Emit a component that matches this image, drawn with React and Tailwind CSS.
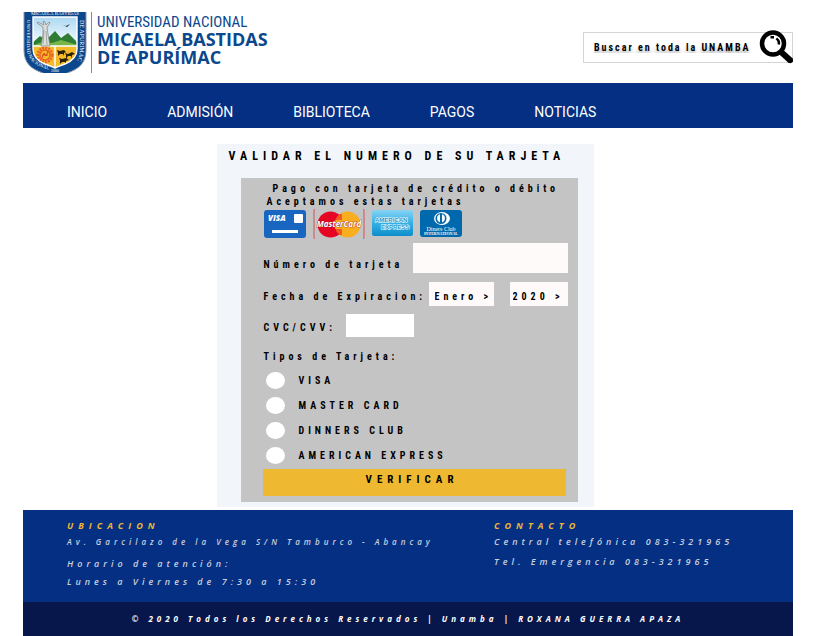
import React from "react";

const navItems = ["INICIO", "ADMISIÓN", "BIBLIOTECA", "PAGOS", "NOTICIAS"];
const cardTypes = ["VISA", "MASTER CARD", "DINNERS CLUB", "AMERICAN EXPRESS"];

function Shield() {
  return (
    <svg viewBox="0 0 64 61" className="h-[61px] w-16 shrink-0" role="img" aria-label="Escudo UNAMBA">
      <defs>
        <clipPath id="field">
          <path d="M10 5H54V37C54 46 47 50 42 52C37 54 34 55 32 56C30 55 27 54 22 52C17 50 10 46 10 37Z" />
        </clipPath>
        <path id="leftRim" d="M4 8V36C4 48 12 54 27 58" />
        <path id="rightRim" d="M57 8V36C57 44 55 49 50 52" />
        <linearGradient id="sky" x2="0" y2="1">
          <stop offset="0" stopColor="#a9d7f2" />
          <stop offset="1" stopColor="#fff" />
        </linearGradient>
      </defs>
      <path d="M1 0H63V38C63 51 56 57 44 61H20C8 57 1 51 1 38Z" fill="#0b478c" />
      <path d="M1 0V38C1 51 8 57 20 61M63 0V38C63 51 56 57 44 61" fill="none" stroke="#8796aa" />
      <g clipPath="url(#field)">
        <path fill="url(#sky)" d="M9 4h46v31H9z" />
        <path fill="#2f7d35" d="M9 31L17 24L23 28L32 19L38 26L45 21L55 31V36H9Z" />
        <path fill="#78b747" d="M9 34L19 30L29 31L38 28L55 33V36H9Z" />
        <path fill="#f5ba27" d="M9 34h46v23H9z" />
        <path stroke="#fff" strokeWidth="1.5" d="M9 34h46M32 34v22" />
        <path fill="#dcdedb" stroke="#7d827f" strokeWidth=".7" d="M20 9l2 1 1 3 3-3 1 1-3 4 1 7 2 12h-9l2-12v-7l-6-4 1-1 6 3z" />
        <path stroke="#7d827f" strokeWidth=".6" d="M21 18l-1 14M23 19l1 14" />
        <path fill="#172d31" d="M39 13l4 1 4-2-3 3-2-1z" />
        <circle cx="22" cy="43" r="7" fill="none" stroke="#eb6522" strokeWidth="3" strokeDasharray="2 1" />
        <circle cx="22" cy="43" r="5" fill="#f5ba27" stroke="#eb6522" strokeWidth="1.4" />
        <path d="M19 46l2-5 2 3 2-5M19 43h6" fill="none" stroke="#d64c22" />
        <path fill="#2c210d" d="M34 38l3 1 4-1 2 2-2 1v3l-1-2h-3l-2 2v-3zM42 41l3 1 4-2 3 2-3 1v4l-1-3h-3l-2 3v-4zM36 46l3 1 4-1 3 2-3 1v3l-1-2h-3l-2 2v-4z" />
      </g>
      <path d="M10 5H54V37C54 46 47 50 42 52C37 54 34 55 32 56C30 55 27 54 22 52C17 50 10 46 10 37Z" fill="none" stroke="#fff" strokeWidth="1.4" />
      <g fill="#fff" fontFamily="'Liberation Serif', serif">
        <text x="32" y="3" fontSize="5" textAnchor="middle">MICAELA BASTIDAS</text>
        <text fontSize="5"><textPath href="#leftRim">UNIVERSIDAD NACIONAL</textPath></text>
        <text fontSize="6"><textPath href="#rightRim">DE APURIMAC</textPath></text>
        <text x="28" y="60" fontSize="4">2000</text>
      </g>
    </svg>
  );
}

function SearchIcon() {
  return (
    <svg viewBox="0 0 34 34" className="h-[34px] w-[34px]" aria-hidden="true">
      <path d="M21 21L32 31" stroke="#000" strokeWidth="6" />
      <path d="M29 28.500L31.500 30.500" stroke="#000" strokeWidth="5" strokeLinecap="round" />
      <circle cx="14" cy="13.500" r="11" fill="#fff" stroke="#000" strokeWidth="4.500" />
      <path d="M11.500 7.300h3.500M17.300 8.500q3.200 2 2.500 6" fill="none" stroke="#000" strokeWidth="2.600" />
    </svg>
  );
}

function CardLogos() {
  return (
    <div className="mt-0.5 flex items-start gap-[7px] pl-px tracking-normal">
      <svg viewBox="0 0 42 28" className="h-7 w-[42px]" role="img" aria-label="Visa">
        <rect width="42" height="28" rx="3" fill="#1966c0" />
        <text x="4" y="11" fill="#fff" fontFamily="'Open Sans', sans-serif" fontSize="8" fontWeight="800" fontStyle="italic">VISA</text>
        <rect x="30" y="4" width="9" height="9" rx="1" fill="#fff" />
        <path fill="#fff" d="M8 20h26v3H8z" />
      </svg>
      <svg viewBox="0 0 52 30" className="-mt-px h-[30px] w-[52px]" role="img" aria-label="MasterCard">
        <path d="M2 0Q1 0 1 2V28Q1 30 2 30M50 0Q51 0 51 2V28Q51 30 50 30" fill="none" stroke="#cf5359" />
        <circle cx="17.500" cy="15.500" r="13" fill="#e60624" />
        <circle cx="34.500" cy="15.500" r="13" fill="#fbad20" />
        <path d="M23 6h6M22 8h7M21 10h8M21 21h8M22 23h7M23 25h6" stroke="#e60624" />
        <text x="26" y="18" textAnchor="middle" fill="#fff" stroke="#8b2020" strokeWidth=".7" paintOrder="stroke" fontFamily="'Open Sans', sans-serif" fontSize="8" fontWeight="700" fontStyle="italic">MasterCard</text>
      </svg>
      <svg viewBox="0 0 41 26" className="h-[26px] w-[41px]" role="img" aria-label="American Express">
        <defs>
          <linearGradient id="amex" x2="0" y2="1">
            <stop offset="0" stopColor="#86d3f5" />
            <stop offset=".5" stopColor="#36b0e4" />
            <stop offset="1" stopColor="#0e8ecb" />
          </linearGradient>
        </defs>
        <rect width="41" height="26" rx="2" fill="url(#amex)" />
        <g fill="#2795c7" stroke="#fff" strokeWidth="1" paintOrder="stroke" fontFamily="'Liberation Sans', sans-serif" fontSize="6" fontWeight="700">
          <text x="3" y="12">AMERICAN</text>
          <text x="9" y="19">EXPRESS</text>
        </g>
      </svg>
      <svg viewBox="0 0 42 27" className="h-[27px] w-[42px]" role="img" aria-label="Diners Club International">
        <rect width="42" height="27" rx="3" fill="#0069ad" />
        <ellipse cx="22" cy="8.500" rx="8" ry="6.500" fill="#fff" />
        <circle cx="21" cy="8.500" r="5.500" fill="#0069ad" />
        <path d="M20 4.300a4.200 4.200 0 0 0 0 8zM22 4.300a4.200 4.200 0 0 1 0 8z" fill="#fff" />
        <g fill="#fff" textAnchor="middle" fontFamily="'Liberation Serif', serif">
          <text x="21" y="21" fontSize="6" fontWeight="400">Diners Club</text>
          <text x="21" y="25" fontSize="4" fontWeight="700">INTERNATIONAL</text>
        </g>
      </svg>
    </div>
  );
}

export default function App() {
  return (
    <div className="min-h-screen bg-white pl-[23px] pr-7 font-['Roboto_Condensed','Roboto',sans-serif] text-black">
      <header className="flex h-[83px] items-start justify-between pt-3">
        <a href="#" className="flex gap-1 text-[#0b478c]">
          <Shield />
          <div className="border-l border-[#6d8cb3] pl-[5px] pt-0.5">
            <div className="text-[15px] leading-4">UNIVERSIDAD NACIONAL</div>
            <div className="font-['Open_Sans','Noto_Sans',sans-serif] text-[18px] font-bold leading-[18px]">MICAELA BASTIDAS<br />DE APURÍMAC</div>
          </div>
        </a>
        <form className="relative mt-5 w-[210px]" onSubmit={(e) => e.preventDefault()}>
          <input
            aria-label="Buscar"
            placeholder="Buscar en toda la UNAMBA"
            className="h-[31px] w-full border border-[#d4d4d4] pl-2.5 pr-8 text-[10px] font-bold tracking-[2px] outline-none [text-shadow:0_4px_4px_rgba(0,0,0,0.4)] placeholder:text-black placeholder:opacity-100"
          />
          <button aria-label="Buscar" className="absolute -top-0.5 right-0"><SearchIcon /></button>
        </form>
      </header>

      <nav className="flex h-[45px] gap-[60px] bg-[#042f83] pl-[44px] pt-[19px] font-['Roboto',sans-serif] text-[14px] leading-5 text-white">
        {navItems.map((item) => <a key={item} href="#">{item}</a>)}
      </nav>

      <div className="flex justify-center pr-1.5 pt-4">
        <main className="w-[377px] bg-[#f2f6fa] px-[16px] pb-[5px] pl-6">
          <h1 className="-mx-3 h-[34px] whitespace-nowrap pt-1 text-[12px] font-bold leading-4 tracking-[5px]">VALIDAR EL NUMERO DE SU TARJETA</h1>
          <form className="bg-[#c4c4c4] pb-1.5 pl-[22px] pr-2.5 pt-1 text-[10px] font-bold tracking-[4px]" onSubmit={(e) => e.preventDefault()}>
            <p className="whitespace-nowrap pl-2.5 leading-[13px]">Pago con tarjeta de crédito o débito</p>
            <p className="whitespace-nowrap pl-1 leading-[13px]">Aceptamos estas tarjetas</p>
            <CardLogos />
            <div className="mt-1 flex h-[30px] items-center justify-between pl-px">
              <label htmlFor="numero" className="whitespace-nowrap pt-3">Número de tarjeta</label>
              <input id="numero" className="h-[30px] w-[155px] bg-[#fffafa] px-2 outline-none" />
            </div>
            <div className="mt-[9px] flex h-6 items-center justify-between pl-px">
              <label htmlFor="mes" className="whitespace-nowrap pt-1">Fecha de Expiracion:</label>
              <div className="flex gap-4">
                <select id="mes" className="h-6 w-[65px] appearance-none bg-[#fffafa] pl-1.5 pt-1 outline-none"><option>Enero &gt;</option></select>
                <select aria-label="Año de expiración" className="h-6 w-[58px] appearance-none bg-[#fffafa] pl-[3px] pt-1 outline-none"><option>2020 &gt;</option></select>
              </div>
            </div>
            <div className="mt-2 flex h-[23px] items-center gap-2.5 pl-px">
              <label htmlFor="cvc" className="pt-1">CVC/CVV:</label>
              <input id="cvc" className="h-[23px] w-[68px] bg-white px-2 outline-none" />
            </div>
            <fieldset className="mt-3">
              <legend className="pl-px leading-4">Tipos de Tarjeta:</legend>
              <div className="mb-px mt-[3px]">
                {cardTypes.map((type) => (
                  <label key={type} className="flex h-[25px] items-center gap-[14px] pl-[3px]">
                    <input type="radio" name="tipo" className="h-[17px] w-[19px] appearance-none rounded-[50%] bg-white checked:bg-[#042f83]" />
                    {type}
                  </label>
                ))}
              </div>
            </fieldset>
            <button className="block h-[27px] w-[calc(100%-2px)] bg-[#eeb831] pb-1 pr-1 text-[11px] font-bold tracking-[5px]">VERIFICAR</button>
          </form>
        </main>
      </div>

      <footer className="mt-[3px] font-['Open_Sans','Noto_Sans',sans-serif] text-[9px] font-semibold italic tracking-[4px] text-[#c9cfdd]">
        <div className="grid h-[92px] grid-cols-[10fr_7fr] bg-[#042f83] pl-11 pt-2">
          <section>
            <h2 className="font-bold leading-4 tracking-[5px] text-[#eeb831]">UBICACION</h2>
            <p className="whitespace-nowrap text-[8px] leading-4">Av. Garcilazo de la Vega S/N Tamburco - Abancay</p>
            <p className="mt-1 leading-5">Horario de atención:</p>
            <p className="leading-4">Lunes a Viernes de 7:30 a 15:30</p>
          </section>
          <section>
            <h2 className="font-bold leading-4 tracking-[5px] text-[#eeb831]">CONTACTO</h2>
            <p className="leading-4">Central telefónica 083-321965</p>
            <p className="mt-1 leading-4">Tel. Emergencia 083-321965</p>
          </section>
        </div>
        <p className="flex h-[34px] items-center justify-center whitespace-nowrap bg-[#07174c] text-[8px] font-bold text-white">© 2020 Todos los Derechos Reservados | Unamba | ROXANA GUERRA APAZA</p>
      </footer>
    </div>
  );
}
